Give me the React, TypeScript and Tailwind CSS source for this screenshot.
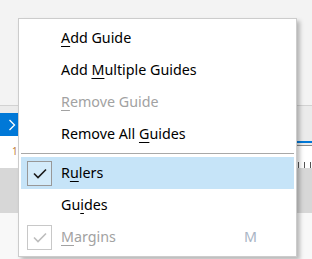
import React from "react";

type Item = {
  label: string;
  key: number; // index of the access-key letter
  disabled?: boolean;
  checked?: boolean;
  active?: boolean;
  shortcut?: string;
};

const groups: Item[][] = [
  [
    { label: "Add Guide", key: 0 },
    { label: "Add Multiple Guides", key: 4 },
    { label: "Remove Guide", key: 0, disabled: true },
    { label: "Remove All Guides", key: 11 },
  ],
  [
    { label: "Rulers", key: 1, checked: true, active: true },
    { label: "Guides", key: 2 },
    { label: "Margins", key: 0, checked: true, disabled: true, shortcut: "M" },
  ],
];

function Check({ disabled }: { disabled?: boolean }) {
  return (
    <span
      className={`flex h-[25px] w-[25px] items-center justify-center border ${
        disabled ? "border-[#c8c8c8]" : "border-[#989898] bg-[#d3ebfa]"
      }`}
    >
      <svg width="14" height="11" viewBox="0 0 14 11" fill="none">
        <path
          d="M1 5.5l4 4L13 1.5"
          stroke={disabled ? "#bdbdbd" : "#1a1a1a"}
          strokeWidth="1.6"
        />
      </svg>
    </span>
  );
}

function MenuRow({ item }: { item: Item }) {
  const before = item.label.slice(0, item.key);
  const letter = item.label[item.key];
  const after = item.label.slice(item.key + 1);
  return (
    <div
      className={`mx-[2px] flex h-[32px] items-center ${item.active ? "bg-[#c6e4f8]" : ""} ${
        item.disabled ? "text-[#a2a2a2]" : "text-[#000000]"
      }`}
    >
      <div className="flex w-[40px] justify-end pr-[9px]">{item.checked && <Check disabled={item.disabled} />}</div>
      <span className="flex-1 whitespace-pre">
        {before}
        <span className="underline underline-offset-[3px] decoration-1">{letter}</span>
        {after}
      </span>
      {item.shortcut && <span className="w-[50px] text-[#a8b4c4]">{item.shortcut}</span>}
    </div>
  );
}

function RulerTicks() {
  return (
    <div className="flex h-[22px] items-end gap-[5px] pl-[2px]">
      <span className="h-[6px] w-px bg-[#555]" />
      <span className="h-[6px] w-px bg-[#555]" />
      <span className="h-[6px] w-px bg-[#555]" />
    </div>
  );
}

export default function App() {
  return (
    <div
      className="relative h-[259px] w-[312px] overflow-hidden bg-[#f3f3f3]"
      style={{ fontFamily: '"Noto Sans", "Open Sans", sans-serif' }}
    >
      <div className="flex h-full">
        {/* left strip */}
        <div className="flex w-[18px] flex-col">
          <div className="h-[105px] bg-[#f3f3f3]" />
          <div className="h-px bg-[#d2d2d2]" />
          <div className="h-[7px] bg-[#ebebeb]" />
          <div className="flex h-[23px] items-center justify-end bg-[#0078d7] pr-[2px]">
            <svg width="8" height="12" viewBox="0 0 8 12" fill="none">
              <path d="M1.5 1l5 5-5 5" stroke="#ffffff" strokeWidth="1.3" />
            </svg>
          </div>
          <div className="relative flex h-[32px] bg-white">
            <span className="ml-[5px] h-full w-px bg-[#6b6b6b]" />
            <span className="ml-[7px] mt-[10px] text-[10px] leading-none text-[#c07a3a]">1</span>
            <span className="ml-px h-full w-px bg-[#6b6b6b]" />
          </div>
          <div className="h-[45px] bg-[#d7d7d7]" />
          <div className="flex-1 bg-[#f8f8f8]" />
        </div>
        {/* right strip */}
        <div className="flex flex-1 flex-col">
          <div className="h-[105px] bg-[#f3f3f3]" />
          <div className="h-px bg-[#d2d2d2]" />
          <div className="h-[35px] bg-[#ebebeb]" />
          <div className="h-[2px] bg-[#0078d7]" />
          <div className="h-[2px] bg-[#ebebeb]" />
          <div className="h-px bg-[#8a8a8a]" />
          <div className="flex justify-end bg-white pr-[1px]">
            <div className="w-[15px]">
              <RulerTicks />
            </div>
          </div>
          <div className="h-[45px] bg-[#d7d7d7]" />
          <div className="flex-1 bg-[#f8f8f8]" />
        </div>
      </div>

      <div className="absolute left-[18px] top-[18px] w-[279px] border border-[#cccccc] bg-white py-[3px] text-[14.3px] shadow-[3px_3px_4px_rgba(0,0,0,0.25)]">
        {groups[0].map((it) => (
          <MenuRow key={it.label} item={it} />
        ))}
        <div className="mx-[2px] flex h-[7px] items-center">
          <div className="h-px w-full bg-[#a8a8a8]" />
        </div>
        {groups[1].map((it) => (
          <MenuRow key={it.label} item={it} />
        ))}
      </div>
    </div>
  );
}
